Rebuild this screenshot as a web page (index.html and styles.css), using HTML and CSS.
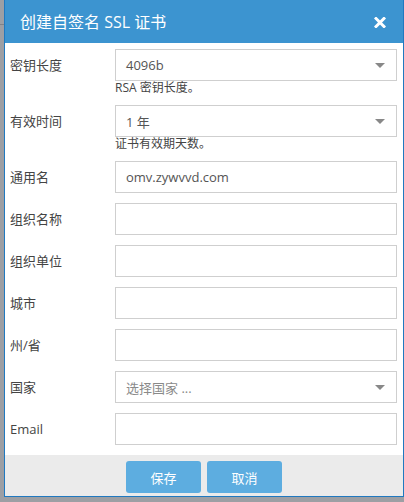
FILE: index.html
```html
<!DOCTYPE html>
<html lang="zh">
<head>
<meta charset="utf-8">
<link rel="stylesheet" href="styles.css">
</head>
<body>
<div class="dialog">
  <div class="header">
    <span class="title">创建自签名 SSL 证书</span>
    <svg class="close" width="12" height="11" viewBox="0 0 12 11"><path d="M2 1.5 L10 9.5 M10 1.5 L2 9.5" stroke="#fff" stroke-width="3" stroke-linecap="square" fill="none"/></svg>
  </div>
  <div class="body">
    <div class="row">
      <label class="label">密钥长度</label>
      <div class="field">
        <div class="input select"><span>4096b</span><i class="arrow"></i></div>
        <div class="help">RSA 密钥长度。</div>
      </div>
    </div>
    <div class="row">
      <label class="label">有效时间</label>
      <div class="field">
        <div class="input select"><span>1 年</span><i class="arrow"></i></div>
        <div class="help">证书有效期天数。</div>
      </div>
    </div>
    <div class="row">
      <label class="label">通用名</label>
      <div class="field"><div class="input"><span>omv.zywvvd.com</span></div></div>
    </div>
    <div class="row">
      <label class="label">组织名称</label>
      <div class="field"><div class="input"></div></div>
    </div>
    <div class="row">
      <label class="label">组织单位</label>
      <div class="field"><div class="input"></div></div>
    </div>
    <div class="row">
      <label class="label">城市</label>
      <div class="field"><div class="input"></div></div>
    </div>
    <div class="row">
      <label class="label">州/省</label>
      <div class="field"><div class="input"></div></div>
    </div>
    <div class="row">
      <label class="label">国家</label>
      <div class="field"><div class="input select"><span class="placeholder">选择国家 ...</span><i class="arrow"></i></div></div>
    </div>
    <div class="row">
      <label class="label">Email</label>
      <div class="field"><div class="input"></div></div>
    </div>
  </div>
  <div class="footer">
    <button class="btn">保存</button>
    <button class="btn">取消</button>
  </div>
</div>
</body>
</html>
```
FILE: styles.css
```css
html, body {
  margin: 0;
  padding: 0;
}
body {
  width: 404px;
  height: 502px;
  overflow: hidden;
  background: linear-gradient(to bottom, #9d9fa4 0, #9d9fa4 24px, #808288 24px, #808288 25px, #9d9fa4 25px);
  font-family: "Open Sans", "Noto Sans CJK SC", sans-serif;
}
.dialog {
  margin-left: 4px;
  width: 398px;
  height: 496px;
  border: 1px solid #2079c0;
  border-top: none;
  background: #fff;
  display: flex;
  flex-direction: column;
}
.header {
  height: 43px;
  background: #3c94d0;
  display: flex;
  align-items: center;
  justify-content: space-between;
  padding: 0 17px 0 15px;
  flex-shrink: 0;
}
.title {
  color: #fff;
  font-size: 16px;
  margin-top: -2px;
}
.close {
  display: block;
  margin-top: 1px;
}
.body {
  flex: 1;
  padding: 6px 5px 0 5px;
  display: flex;
  flex-direction: column;
  gap: 10px;
}
.row {
  display: flex;
}
.label {
  width: 105px;
  height: 32px;
  line-height: 32px;
  font-size: 13px;
  color: #444;
  flex-shrink: 0;
}
.field {
  flex: 1;
  margin-right: 1px;
}
.input {
  box-sizing: border-box;
  height: 32px;
  border: 1px solid #cfcfcf;
  display: flex;
  align-items: center;
  padding: 0 10px;
  font-size: 13px;
  color: #555;
}
.select {
  justify-content: space-between;
}
.placeholder {
  color: #8a8a8a;
}
.arrow {
  width: 0;
  height: 0;
  border-left: 5px solid transparent;
  border-right: 5px solid transparent;
  border-top: 5px solid #888;
  margin-right: 1px;
}
.help {
  height: 14px;
  line-height: 14px;
  font-size: 12px;
  color: #444;
}
.footer {
  height: 41px;
  background: #ebebeb;
  display: flex;
  justify-content: center;
  align-items: flex-start;
  padding-top: 6px;
  box-sizing: border-box;
  gap: 6px;
  flex-shrink: 0;
}
.btn {
  width: 75px;
  height: 32px;
  border: none;
  border-radius: 3px;
  background: #5dade0;
  color: #fff;
  font-family: "Open Sans", "Noto Sans CJK SC", sans-serif;
  font-size: 13px;
  padding: 0;
}
```
